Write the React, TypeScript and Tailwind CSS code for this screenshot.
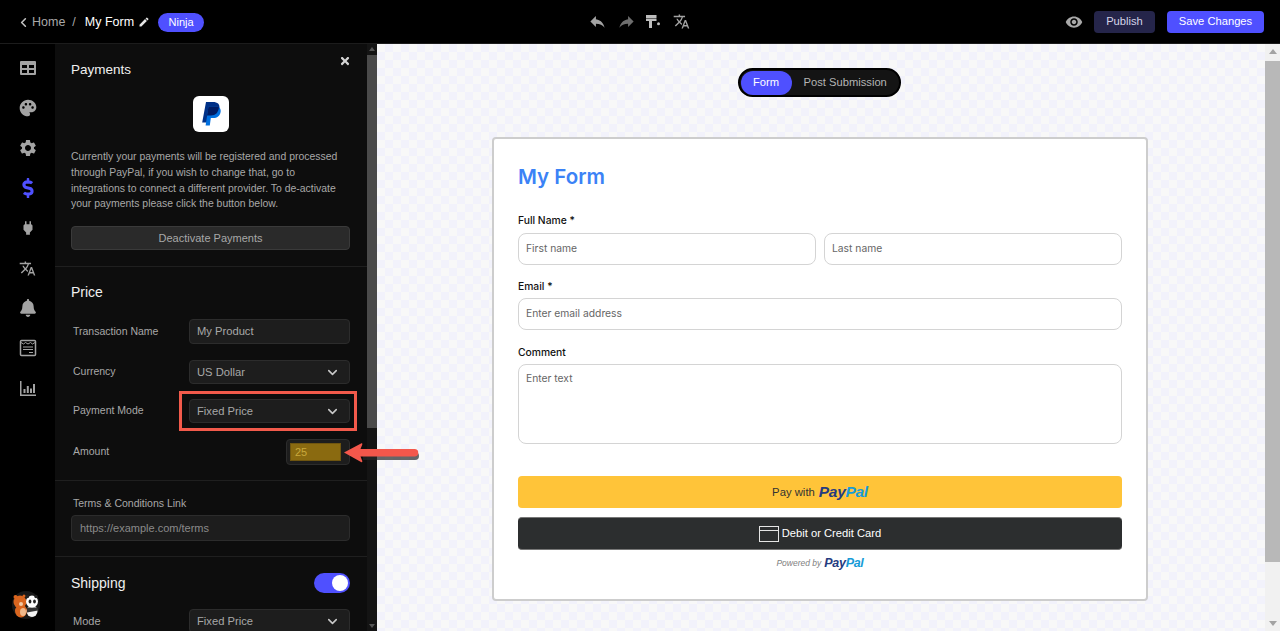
import React from "react";
import { ChevronDown, ChevronLeft } from "lucide-react";
import { FaBell, FaDollarSign, FaTimes } from "react-icons/fa";
import {
  MdEdit,
  MdPalette,
  MdPower,
  MdReply,
  MdSettings,
  MdTranslate,
  MdVisibility,
} from "react-icons/md";

function ListIcon() {
  return (
    <svg width="18" height="18" viewBox="0 0 18 18" fill="none" stroke="#a3a3a3" strokeWidth="1.5">
      <rect x="1.5" y="1.5" width="15" height="15" rx="1" />
      <path d="M2 3.500l2.500 1.500 2-1.500 2.500 1.500 2.500-1.500 2 1.500 2.500-1.500" strokeWidth="1" />
      <path d="M4 8h10M4 10.500h10M10 13.500h4" strokeWidth="1.200" />
    </svg>
  );
}

function TableIcon() {
  return (
    <svg width="16" height="14" viewBox="0 0 16 14" fill="#a3a3a3">
      <path d="M1 0h14a1 1 0 0 1 1 1v12a1 1 0 0 1-1 1H1a1 1 0 0 1-1-1V1a1 1 0 0 1 1-1zm1 4v3h5V4H2zm7 0v3h5V4H9zM2 9v3h5V9H2zm7 0v3h5V9H9z" fillRule="evenodd" />
    </svg>
  );
}

function BarsIcon() {
  return (
    <svg width="16" height="15" viewBox="0 0 16 15" fill="#a3a3a3">
      <path d="M0 0h1.500v13.500H16V15H0z" />
      <path d="M3.500 8h2v4h-2zM6.800 5h2v7h-2zM10 7.500h2V12h-2zM13 3h2v9h-2z" />
    </svg>
  );
}

function PaintIcon() {
  return (
    <svg width="15" height="13" viewBox="0 0 15 13" fill="#bdbdbd">
      <path d="M0 0h10.500v3H0zM0 3.500h10.500V6H6v7H3V6H0z" />
      <circle cx="12.500" cy="8.800" r="1.500" />
    </svg>
  );
}

function Avatar() {
  return (
    <svg width="28" height="28" viewBox="0 0 28 28">
      <circle cx="14" cy="14" r="14" fill="#181818" />
      <circle cx="3.500" cy="6" r="2" fill="#d9651f" />
      <circle cx="12" cy="5" r="1.500" fill="#d9651f" />
      <ellipse cx="9" cy="20" rx="6" ry="6.500" fill="#d9651f" />
      <ellipse cx="11" cy="21" rx="3" ry="4" fill="#f0b98c" />
      <circle cx="8" cy="11" r="6.500" fill="#d9651f" />
      <circle cx="9" cy="13" r="2" fill="#f3c9a5" />
      <ellipse cx="20" cy="20" rx="5.500" ry="6" fill="#f1f1f1" />
      <path d="M15 16.500h10.500l.5 3-11 2z" fill="#333" />
      <circle cx="20" cy="10.500" r="6" fill="#fff" />
      <circle cx="15.500" cy="5.500" r="1.700" fill="#222" />
      <circle cx="24" cy="5.500" r="1.700" fill="#222" />
      <ellipse cx="18" cy="10.500" rx="1.400" ry="1.900" fill="#222" />
      <ellipse cx="22.500" cy="10.500" rx="1.400" ry="1.900" fill="#222" />
    </svg>
  );
}

function PayPalMark() {
  return (
    <svg width="20" height="24" viewBox="0 0 20 24">
      <path d="M5 0h7c4.500 0 7 2.200 6.400 6.200C17.700 11 14.500 13.500 10 13.500H7.200L6 20.500H1.200z" fill="#003087" />
      <path d="M7.500 4.500h7.200c3.700 0 5.500 2 4.900 5.400-.7 4-3.600 6.100-7.300 6.100h-2.500L8.800 23.500H4.600z" fill="#0070e0" />
      <path d="M7.500 4.500h7.200c1.300 0 2.400.3 3.300.8C17.300 10.700 14.500 13.500 10 13.500H6z" fill="#001c64" />
    </svg>
  );
}

function PayPalWord({ size }: { size: string }) {
  return (
    <span className={`font-bold italic tracking-[-0.3px] ${size}`}>
      <span className="text-[#253b80]">Pay</span>
      <span className="text-[#179bd7]">Pal</span>
    </span>
  );
}

function SelectField({ value, className }: { value: string; className?: string }) {
  return (
    <div className={`flex h-6 w-[161px] items-center justify-between rounded border border-[#2c2c2c] bg-[#1d1d1d] pl-[7px] pr-[9px] text-[11.200px] text-[#a8a8a8] ${className ?? ""}`}>
      <span>{value}</span>
      <ChevronDown size={15} strokeWidth={2.5} color="#c8c8c8" />
    </div>
  );
}

function FormField({ placeholder, className }: { placeholder: string; className?: string }) {
  return (
    <div className={`flex h-8 items-center rounded-lg border border-[#d4d4d4] bg-white px-[7px] text-[10.300px] text-[#666] ${className ?? ""}`}>
      {placeholder}
    </div>
  );
}

const sideIcons = [
  <TableIcon key="table" />,
  <MdPalette key="palette" size={20} color="#a3a3a3" />,
  <MdSettings key="settings" size={20} color="#a3a3a3" />,
  <FaDollarSign key="dollar" size={20} color="#4f50ff" />,
  <MdPower key="power" size={18} color="#a3a3a3" />,
  <MdTranslate key="translate" size={17} color="#a3a3a3" />,
  <FaBell key="bell" size={18} color="#a3a3a3" />,
  <ListIcon key="list" />,
  <BarsIcon key="chart" />,
];

export default function App() {
  return (
    <div className="flex h-[631px] w-[1280px] flex-col overflow-hidden font-['Liberation_Sans',Arial,sans-serif]">
      <header className="flex h-11 shrink-0 items-center border-b border-[#1c1c1c] bg-black">
        <div className="flex w-[500px] items-center pl-4 pt-[1px] text-[12.500px]">
          <ChevronLeft size={15} strokeWidth={2.5} color="#c4c4c4" />
          <span className="ml-[1px] text-[#a8a8a8]">Home</span>
          <span className="ml-[7px] text-[#a8a8a8]">/</span>
          <span className="ml-[9px] text-white">My Form</span>
          <MdEdit size={12} color="#e5e5e5" className="ml-[4px]" />
          <span className="ml-2 flex h-[19px] w-[46px] items-center justify-center rounded-full bg-[#4f50ff] text-[11px] text-white">Ninja</span>
        </div>
        <div className="ml-[88px] flex items-center gap-[10px]">
          <MdReply size={19} color="#a3a3a3" />
          <MdReply size={19} color="#6e6e6e" className="-scale-x-100" />
          <PaintIcon />
          <MdTranslate size={17} color="#a3a3a3" className="ml-[2px]" />
        </div>
        <div className="ml-auto flex items-center pr-4">
          <MdVisibility size={18} color="#a8a8a8" />
          <span className="ml-[11px] flex h-[22px] w-[61px] items-center justify-center rounded bg-[#25254a] text-[11.200px] text-[#d4d4e8]">Publish</span>
          <span className="ml-3 flex h-[22px] w-[97px] items-center justify-center rounded bg-[#4f50ff] text-[11.200px] text-white">Save Changes</span>
        </div>
      </header>

      <div className="flex min-h-0 flex-1">
        <aside className="flex w-[55px] shrink-0 flex-col items-center bg-black pb-3 pt-1">
          {sideIcons.map((icon, index) => (
            <div key={index} className="flex h-10 w-full items-center justify-center">
              {icon}
            </div>
          ))}
          <div className="mr-[3px] mt-auto">
            <Avatar />
          </div>
        </aside>

        <div className="relative flex w-[322px] shrink-0 bg-[#0d0d0d]">
          <div className="min-w-0 flex-1 overflow-hidden">
            <section className="relative border-b border-[#1f1f1f] px-4 pb-4 pt-4">
              <h2 className="text-[13.500px] text-[#f0f0f0]">Payments</h2>
              <FaTimes size={12} color="#d4d4d4" className="absolute right-[16px] top-[11px]" />
              <div className="mx-auto mt-4 flex h-9 w-9 items-center justify-center rounded-md bg-white">
                <PayPalMark />
              </div>
              <p className="mt-[17px] max-w-[276px] text-[10.450px] leading-[15.700px] text-[#a8a8a8]">
                Currently your payments will be registered and processed through PayPal, if you wish to change that, go to integrations to connect a different provider. To de-activate your payments please click the button below.
              </p>
              <div className="mt-[14px] flex h-6 w-[279px] items-center justify-center rounded border border-[#3a3a3a] bg-[#2a2a2a] text-[11px] text-[#a8a8a8]">
                Deactivate Payments
              </div>
            </section>

            <section className="border-b border-[#1f1f1f] pb-[15px] pl-4 pt-[15px]">
              <h2 className="text-sm text-[#f0f0f0]">Price</h2>
              <div className="mt-[17px] flex h-[25px] w-[279px] items-center justify-between">
                <span className="pl-[2px] text-[10.500px] text-[#a8a8a8]">Transaction Name</span>
                <div className="flex h-[25px] w-[161px] items-center rounded border border-[#2c2c2c] bg-[#1d1d1d] pl-[7px] text-[11.200px] text-[#a8a8a8]">My Product</div>
              </div>
              <div className="mt-4 flex w-[279px] items-center justify-between">
                <span className="pl-[2px] text-[10.500px] text-[#a8a8a8]">Currency</span>
                <SelectField value="US Dollar" />
              </div>
              <div className="relative mt-[15px] flex w-[279px] items-center justify-between">
                <span className="pl-[2px] text-[10.500px] text-[#a8a8a8]">Payment Mode</span>
                <SelectField value="Fixed Price" />
                <div className="absolute -top-2 left-[108px] h-10 w-[178px] border-[3px] border-[#f25a4b]"></div>
              </div>
              <div className="mt-[16px] flex w-[279px] items-center justify-between">
                <span className="pl-[2px] text-[10.500px] text-[#a8a8a8]">Amount</span>
                <div className="flex h-[26px] w-16 items-center rounded border border-[#2c2c2c] bg-[#1d1d1d] pl-[3px]">
                  <div className="flex h-[18px] w-[51px] items-center border border-[#6f5510] bg-[#8a6a10] pl-1 text-[11px] text-[#c9a83c]">25</div>
                </div>
              </div>
            </section>

            <section className="border-b border-[#1f1f1f] pb-[15px] pl-4 pt-4">
              <div className="pl-[2px] text-[10.500px] leading-[13px] text-[#a8a8a8]">Terms &amp; Conditions Link</div>
              <div className="mt-[5px] flex h-[26px] w-[279px] items-center rounded border border-[#2c2c2c] bg-[#1d1d1d] pl-2 text-[11px] text-[#8a8a8a]">https://example.com/terms</div>
            </section>

            <section className="pl-4 pt-4">
              <div className="flex h-5 w-[279px] items-center justify-between">
                <h2 className="text-sm text-[#f0f0f0]">Shipping</h2>
                <div className="flex h-5 w-9 items-center justify-end rounded-full bg-[#4f50ff] pr-[2px]">
                  <div className="h-4 w-4 rounded-full bg-white"></div>
                </div>
              </div>
              <div className="mt-4 flex w-[279px] items-center justify-between">
                <span className="pl-[2px] text-[11px] text-[#a8a8a8]">Mode</span>
                <SelectField value="Fixed Price" />
              </div>
            </section>
          </div>

          <div className="flex w-[10px] shrink-0 flex-col items-center bg-[#141414]">
            <div className="mt-[3px] h-0 w-0 border-x-[3px] border-b-[4px] border-x-transparent border-b-[#555]"></div>
            <div className="mt-1 h-[373px] w-full bg-[#4a4a4a]"></div>
            <div className="mb-[3px] mt-auto h-0 w-0 border-x-[3px] border-t-[4px] border-x-transparent border-t-[#555]"></div>
          </div>

          <svg className="absolute left-[288px] top-[397px]" width="80" height="26" viewBox="0 0 80 26">
            <path d="M20 11h52a4 4 0 0 1 4 4 4 4 0 0 1-4 4H20z" fill="#2a2a2a" opacity="0.7" />
            <path d="M1 11.500L18 2.500c1-.5 1.500 0 1.300 1L17.500 8h54a3.750 3.750 0 0 1 0 7.500h-54l1.800 4.500c.2 1-.3 1.500-1.300 1z" fill="#f4574b" />
          </svg>
        </div>

        <main className="flex min-w-0 flex-1 bg-[#f8f8f8] bg-[conic-gradient(#f2f2fb_25%,#f8f8f8_0_50%,#f2f2fb_0_75%,#f8f8f8_0)] bg-[length:16px_16px]">
          <div className="flex min-w-0 flex-1 flex-col items-center pr-[2px]">
            <div className="mr-[2px] mt-6 flex h-[29px] w-[163px] items-center rounded-full border-2 border-black bg-[#141414] pl-[1px] text-[11.200px]">
              <span className="flex h-6 w-[51px] items-center justify-center rounded-full bg-[#4f50ff] text-white">Form</span>
              <span className="ml-3 text-[#b4b4b4]">Post Submission</span>
            </div>

            <div className="mt-10 h-[464px] w-[656px] rounded-sm border-2 border-[#cdcdcd] bg-white px-6 pt-6 font-['Inter',sans-serif]">
              <h1 className="text-[20.500px] font-semibold leading-7 text-[#3b82f6]">My Form</h1>
              <div className="mt-[23px] text-[10.300px] font-medium leading-3 text-[#111]">Full Name *</div>
              <div className="mt-[7px] flex gap-2">
                <FormField placeholder="First name" className="w-[298px]" />
                <FormField placeholder="Last name" className="w-[298px]" />
              </div>
              <div className="mt-[15px] text-[10.300px] font-medium leading-3 text-[#111]">Email *</div>
              <FormField placeholder="Enter email address" className="mt-[6px] w-[604px]" />
              <div className="mt-4 text-[10.300px] font-medium leading-3 text-[#111]">Comment</div>
              <div className="mt-[6px] h-20 w-[604px] rounded-lg border border-[#d4d4d4] px-[7px] pt-[7px] text-[10.300px] leading-3 text-[#666]">Enter text</div>
              <div className="mt-8 flex h-8 w-[604px] items-center justify-center gap-1 rounded bg-[#ffc439] font-['Liberation_Sans',sans-serif] text-[11.300px] text-[#333]">
                Pay with <PayPalWord size="text-[15.500px]" />
              </div>
              <div className="mt-[9px] flex h-[33px] w-[604px] items-center justify-center gap-[3px] rounded border-y border-[#777] bg-[#2c2e2f] font-['Liberation_Sans',sans-serif] text-[11.200px] text-white">
                <svg width="20" height="16" viewBox="0 0 20 16" fill="none" stroke="#e5e5e5">
                  <rect x="0.500" y="0.500" width="19" height="15" />
                  <path d="M0.500 4.500h19" />
                </svg>
                Debit or Credit Card
              </div>
              <div className="mt-1 flex items-center justify-center gap-[3px] font-['Liberation_Sans',sans-serif] text-[8.500px] italic text-[#808080]">
                Powered by <PayPalWord size="text-[12.500px]" />
              </div>
            </div>
          </div>

          <div className="flex w-[15px] shrink-0 flex-col items-center bg-[#f1f1f1]">
            <div className="mt-[5px] h-0 w-0 border-x-[4px] border-b-[5px] border-x-transparent border-b-[#a3a3a3]"></div>
            <div className="mt-[7px] h-[501px] w-full bg-[#b8b8b8]"></div>
            <div className="mb-[5px] mt-auto h-0 w-0 border-x-[4px] border-t-[5px] border-x-transparent border-t-[#a3a3a3]"></div>
          </div>
        </main>
      </div>
    </div>
  );
}
